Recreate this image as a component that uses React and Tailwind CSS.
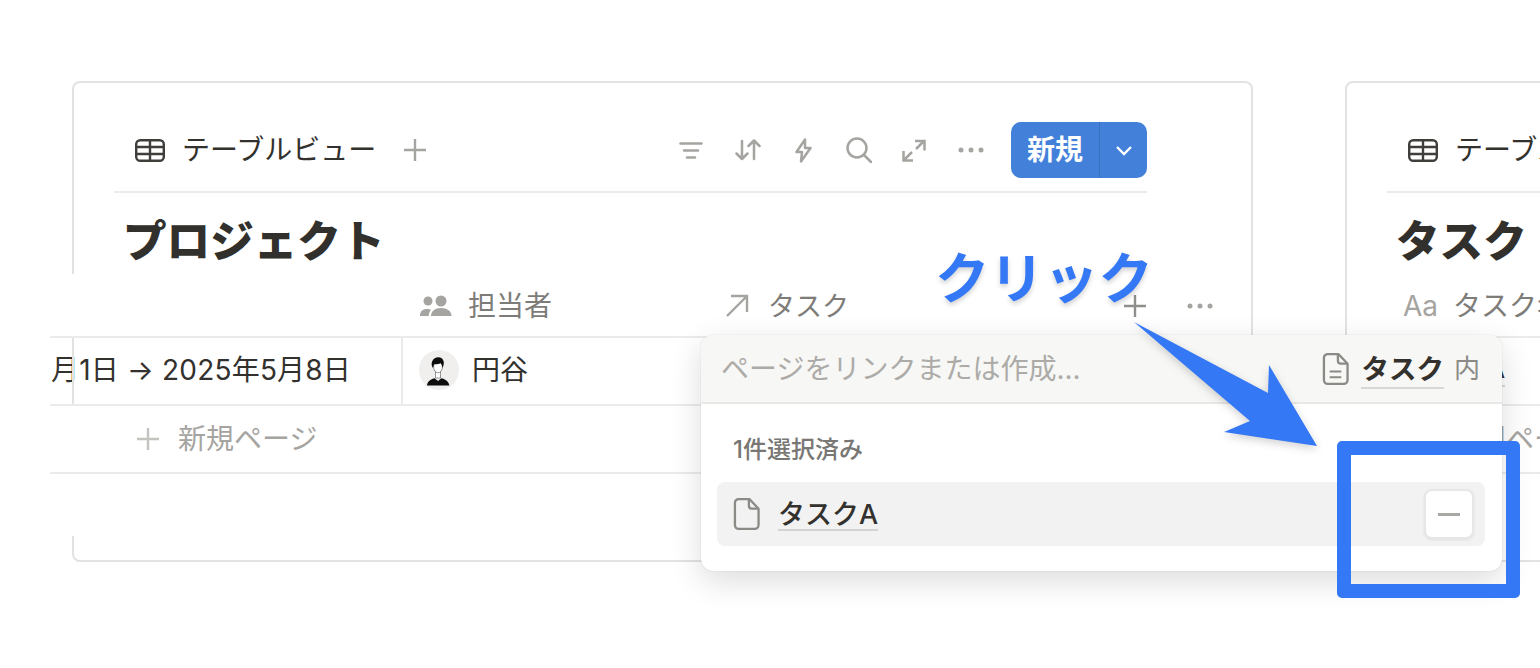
const Plus = ({ className = "" }) => (
  <svg width="22" height="22" viewBox="0 0 22 22" className={className} fill="none" stroke="currentColor" strokeWidth="2.4">
    <path d="M11 0v22M0 11h22" />
  </svg>
);
const TableIcon = () => (
  <svg width="30" height="23" viewBox="0 0 30 23" fill="none" stroke="#403e3a" strokeWidth="2.4" className="shrink-0">
    <rect x="1.2" y="1.2" width="27.6" height="20.6" rx="4" />
    <path d="M1 8h28M1 15h28M15 1v21" />
  </svg>
);
const Dots = ({ className = "" }) => (
  <svg width="26" height="6" viewBox="0 0 26 6" fill="#a5a4a0" className={className}>
    <circle cx="3" cy="3" r="2.5" />
    <circle cx="13" cy="3" r="2.5" />
    <circle cx="23" cy="3" r="2.5" />
  </svg>
);
const Toolbar = ({ children }) => (
  <div className="flex h-[71px] w-[1033px] items-start border-b-2 border-[#ecebea]">
    <div className="flex h-[56px] w-full items-center">
      <div className="ml-[21px] flex items-center">
        <TableIcon />
        <span className="ml-[17px] whitespace-nowrap text-[28px] leading-none text-[#33312d]">テーブルビュー</span>
        <Plus className="ml-[28px] text-[#a5a4a0]" />
      </div>
      {children}
    </div>
  </div>
);
const DocIcon = ({ lines }) => (
  <svg width="27" height="34" viewBox="0 0 28 34" fill="none" stroke="#8b8a86" strokeWidth="2.4" strokeLinejoin="round" className="shrink-0">
    <path d="M6 1.500h11l9.500 10v17a4 4 0 0 1-4 4H6a4 4 0 0 1-4-4v-23a4 4 0 0 1 4-4z" />
    <path d="M16.500 1.500v7a3 3 0 0 0 3 3h7" />
    {lines && <path d="M8 19.500h12M8 25.500h12" strokeWidth="2" />}
  </svg>
);
const Avatar = () => (
  <svg width="40" height="40" viewBox="0 0 40 40" className="shrink-0">
    <circle cx="20" cy="20" r="20" fill="#f0efee" />
    <path d="M16.500 20h5v8h-5z" fill="#fff" stroke="#333" strokeWidth="0.5" />
    <ellipse cx="19" cy="17" rx="4.400" ry="5.800" fill="#fff" stroke="#333" strokeWidth="0.5" />
    <path d="M14 18c-1.500-2-1.800-4.500-.8-6.800C14.500 8.500 17 7 19.800 7.200c3 .2 5 2.500 5 5.500 0 2-.6 3.800-1.300 5.300-.3-2-.7-3.600-1.800-4.800-2 1-4.700 1.100-6.500 1-.6 1.200-.9 2.400-1.200 3.800z" fill="#0d0d0d" />
    <path d="M8 35.500c.3-3.500 2.500-5.800 7.500-7.300l3.500 2.800 3.500-2.800c5 1.500 7.500 3.800 7.800 7.300z" fill="#0d0d0d" />
  </svg>
);

function Card({ width, title, titleClass, tools, header, row, newPageClass, tableClass }) {
  return (
    <div className={`h-[481px] shrink-0 rounded-lg border-2 border-[#e3e2e0] pl-[40px] pt-[39px] ${width}`}>
      <Toolbar>{tools}</Toolbar>
      <div className="flex h-[81px] items-center pt-[16px]">
        <h1 className={`whitespace-nowrap text-[43.600px] font-black leading-none text-[#32302c] ${titleClass}`}>{title}</h1>
      </div>
      <div className={`relative bg-white ${tableClass}`}>
        {header}
        {row}
        <div className={`flex h-[68px] items-center border-b-2 border-[#ecebea] text-[#a5a4a0] ${newPageClass}`}>
          <Plus className="text-[#c4c3c0]" />
          <span className="ml-[19px] whitespace-nowrap text-[28px] leading-none">新規ページ</span>
        </div>
      </div>
    </div>
  );
}

export default function App() {
  return (
    <div className="relative h-[668px] w-[1540px] overflow-hidden bg-white font-['Inter','Noto_Sans_CJK_JP',sans-serif]">
      <div className="flex items-start gap-[92px] pl-[72px] pt-[81px]">
        <Card
          width="w-[1181px]"
          title="プロジェクト"
          titleClass="ml-[9px]"
          tableClass="-ml-[64px] h-[262px] w-[1201px]"
          newPageClass="pl-[87px]"
          tools={
            <div className="ml-auto flex items-center">
              <svg width="24" height="17" viewBox="0 0 24 17" fill="none" stroke="#a5a4a0" strokeWidth="2.600" strokeLinecap="round" className="mr-[32px]">
                <path d="M1.500 1.500h21M5 8.500h14M8 15.500h8" />
              </svg>
              <svg width="26" height="24" viewBox="0 0 26 24" fill="none" stroke="#a5a4a0" strokeWidth="2.500" strokeLinecap="round" strokeLinejoin="round" className="mr-[34px]">
                <path d="M7 3v18M1.500 15.500 7 21l5.500-5.500" />
                <path d="M19 21V2.500M13.500 8 19 2.500 24.500 8" />
              </svg>
              <svg width="17" height="25" viewBox="0 0 17 25" fill="none" stroke="#a5a4a0" strokeWidth="2.500" strokeLinejoin="round" className="mr-[34px]">
                <path d="M10 1.500 1.500 14H7l-1 9.500L15.500 10H10z" />
              </svg>
              <svg width="26" height="26" viewBox="0 0 26 26" fill="none" stroke="#a5a4a0" strokeWidth="2.500" strokeLinecap="round" className="mr-[30px]">
                <circle cx="11" cy="11" r="9.500" />
                <path d="m18 18 7 7" />
              </svg>
              <svg width="24" height="23" viewBox="0 0 24 23" fill="none" stroke="#a5a4a0" strokeWidth="2.500" className="mr-[32px]">
                <path d="M13 2h9.500v9.500M22 2l-8 8M11 21.500H1.500V12M2 21l8-8" />
              </svg>
              <Dots className="mr-[27px]" />
              <div className="flex h-[56px] w-[136px] overflow-hidden rounded-[10px] bg-[#4280da] text-white">
                <div className="flex w-[89px] items-center justify-center border-r border-[#3a70c0] text-[28px] font-bold leading-none">新規</div>
                <div className="flex flex-1 items-center justify-center">
                  <svg width="18" height="11" viewBox="0 0 18 11" fill="none" stroke="#fff" strokeWidth="2.400">
                    <path d="m2 2 7 7 7-7" />
                  </svg>
                </div>
              </div>
            </div>
          }
          header={
            <div className="flex h-[64px] items-center border-b-2 border-[#ecebea] pt-[2px] text-[28px] leading-none text-[#7d7c78]">
              <div className="flex w-[675px] items-center justify-end">
                <svg width="32" height="22" viewBox="0 0 32 22" fill="#a5a4a0" className="shrink-0">
                  <circle cx="8" cy="6" r="4.500" />
                  <circle cx="21" cy="6" r="5.500" />
                  <path d="M0 21c0-4.500 2.500-7 7-7 1.500 0 3 .3 4 1-1.500 1.500-2.200 3.500-2.200 6z" />
                  <path d="M11 21c0-5 4-8 10-8s10.500 3 10.500 8z" />
                </svg>
                <span className="ml-[16px] w-[257px] whitespace-nowrap">担当者</span>
              </div>
              <svg width="24" height="24" viewBox="0 0 24 24" fill="none" stroke="#a5a4a0" strokeWidth="2.400" className="shrink-0">
                <path d="M6 2h16v16M22 2 2 22" />
              </svg>
              <span className="ml-[19px] whitespace-nowrap text-[27px]">タスク</span>
              <Plus className="ml-[275px] text-[#8f8e8a]" />
              <Dots className="ml-[41px]" />
            </div>
          }
          row={
            <div className="relative flex h-[68px] items-center border-b-2 border-[#ecebea] text-[28px] leading-none text-[#33312d]">
              <div className="absolute left-[22px] top-0 h-full w-[2px] bg-[#e3e2e0]" />
              <div className="flex h-full w-[353px] items-center whitespace-nowrap border-r-2 border-[#ecebea] pb-[2px] pl-[1px] tracking-[0.2px]">月1日 → 2025年5月8日</div>
              <div className="mb-[2px] ml-[16px] flex items-center">
                <Avatar />
                <span className="ml-[13px] whitespace-nowrap">円谷</span>
              </div>
            </div>
          }
        />
        <Card
          width="w-[400px]"
          title="タスク"
          titleClass="ml-[9px]"
          tableClass="-ml-[40px] h-[262px] w-[400px]"
          newPageClass="pl-[62px]"
          tools={null}
          header={
            <div className="flex h-[64px] items-center whitespace-nowrap border-b-2 border-[#ecebea] pl-[56px] pt-[2px] text-[28px] leading-none text-[#7d7c78]">
              <span className="font-['Inter',sans-serif] text-[#a5a4a0]">Aa</span>
              <span className="ml-[15px]">タスク名</span>
            </div>
          }
          row={
            <div className="flex h-[68px] items-center border-b-2 border-[#ecebea] pl-[58px] text-[27px] leading-none text-[#33312d]">
              <span className="whitespace-nowrap border-b-2 border-[#d9d8d6] pb-[3px] font-medium">タスクA</span>
            </div>
          }
        />
      </div>

      <div className="absolute left-[701px] top-[335px] h-[236px] w-[801px] overflow-hidden rounded-xl bg-white shadow-[0_0_1px_rgba(0,0,0,0.25),0_10px_32px_rgba(0,0,0,0.14)]">
        <div className="flex h-[69px] items-center border-b-2 border-[#e9e8e6] bg-[#f7f7f5] pl-[20px] pr-[22px]">
          <span className="whitespace-nowrap text-[28px] leading-none text-[#acaba8]">ページをリンクまたは作成...</span>
          <div className="ml-auto flex items-center">
            <DocIcon lines />
            <span className="ml-[12px] mt-[8px] whitespace-nowrap border-b-2 border-[#d9d8d6] pb-[4px] text-[27.500px] font-bold leading-none text-[#33312d]">タスク</span>
            <span className="ml-[10px] text-[26px] leading-none text-[#8b8a86]">内</span>
          </div>
        </div>
        <div className="flex h-[78px] items-center pl-[32px] pt-[14px] text-[24px] font-medium leading-none text-[#787774]">1件選択済み</div>
        <div className="ml-[16px] mr-[17px] flex h-[64px] items-center rounded-lg bg-[#f2f2f2] pl-[16px] pr-[11px]">
          <DocIcon />
          <span className="ml-[18px] mt-[4px] whitespace-nowrap border-b-2 border-[#d4d3d1] pb-[1px] text-[27px] font-medium leading-none text-[#33312d]">タスクA</span>
          <div className="ml-auto flex h-[50px] w-[50px] items-center justify-center rounded-lg border-2 border-[#e8e7e5] bg-white shadow-[0_1px_3px_rgba(0,0,0,0.08)]">
            <div className="h-[3px] w-[22px] bg-[#a9a8a5]" />
          </div>
        </div>
      </div>

      <svg width="200" height="140" viewBox="0 0 200 140" className="absolute left-[1130px] top-[315px] drop-shadow-[0_3px_4px_rgba(0,0,0,0.18)]">
        <path d="M4 7 138 78l1-28 48 81-93-14 26-11z" fill="#3478f6" />
      </svg>
      <div className="absolute left-[935px] top-[245px] whitespace-nowrap text-[54.500px] font-bold leading-[66px] text-[#3478f6] [text-shadow:0_3px_5px_rgba(0,0,0,0.18)]">クリック</div>
      <div className="absolute left-[1337px] top-[441px] h-[157px] w-[183px] rounded-[5px] border-[14px] border-[#3478f6]" />
    </div>
  );
}
